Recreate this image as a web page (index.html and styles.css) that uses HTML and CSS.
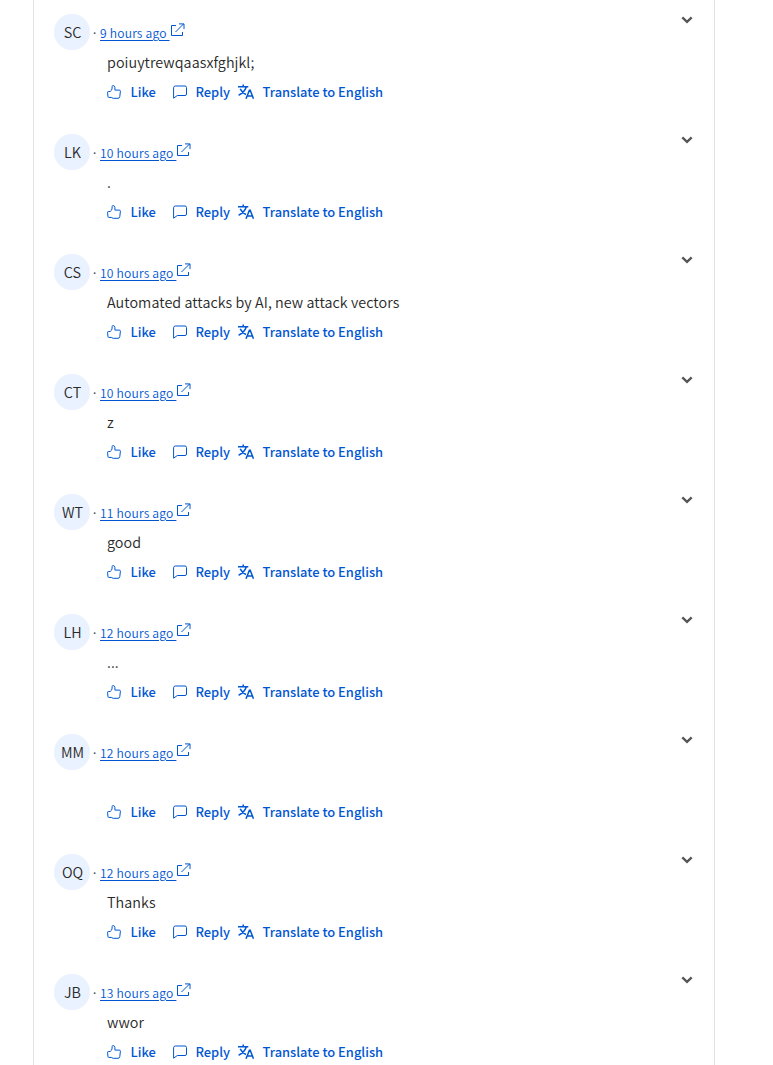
FILE: index.html
```
<!DOCTYPE html>
<html lang="en">
<head>
<meta charset="utf-8">
<title>Comments</title>
<link rel="stylesheet" href="styles.css">
</head>
<body>
<main class="comments" id="comments"></main>
<template id="comment">
<article class="comment">
<div class="avatar"></div>
<div class="content">
<div class="meta"><span class="dot">·</span><a class="time"></a><svg class="ext" viewBox="0 0 15 15"><path d="M6 2.5H1.5V12.5H12.5V9M5.5 9L13.5 1M9 .9H14V6"/></svg></div>
<p class="text"></p>
<div class="actions">
<svg class="thumb" viewBox="0 0 14 14"><path d="M.6 7.2Q.6 6.5 1.3 6.5H3.2Q5 5.5 5.1 3.2V1.4Q5.2.6 6.2.6Q7.9.7 7.9 2.6V5.1H12.3Q13.4 5.1 13.4 6.2L12.8 11.6Q12.5 13.3 11 13.3H6.2L4.2 12.4H1.8Q1 12.4 .9 11.5Z"/></svg><span class="like">Like</span>
<svg class="bubble" viewBox="0 0 14 14"><path d="M2.4 1H12Q13.5 1 13.5 2.5V9Q13.5 10.5 12 10.5H4.3L.6 13.2V2.7Q.6 1 2.4 1Z"/></svg><span class="reply">Reply</span>
<svg class="translate" viewBox="0 0 16 16"><path d="M0 2.8H10.3M5.2.5V2.8M2.2 4.8Q4.3 9 8 10.5M8.2 3Q6.5 8.5.6 11.2M8 14.8L11.4 6.2H12.2L15.5 14.8M9.2 12H14.4"/></svg><span class="translate-label">Translate to English</span>
</div>
</div>
<svg class="chevron" viewBox="0 0 12 8"><path d="M1.3 1.3L6 5.8L10.7 1.3"/></svg>
</article>
</template>
<script src="script.js"></script>
</body>
</html>
```
FILE: styles.css
```
* { box-sizing: border-box; }
body { margin: 0; background: #fff; color: #292929; font-family: "Noto Sans CJK SC", "Noto Sans", sans-serif; }
.comments { width: 682px; height: 1065px; margin-left: 33px; border: solid #e1e1e1; border-width: 0 1px; overflow: hidden; }
.comment { display: flex; height: 120px; padding: 14px 21px 0 20px; }
.avatar { width: 36px; height: 36px; padding-left: 1px; border-radius: 50%; background: #eaf2ff; font-size: 14.4px; font-weight: 350; line-height: 36px; text-align: center; flex: none; }
.content { flex: 1; min-width: 0; }
.meta { display: flex; height: 36px; padding-left: 3px; font-size: 12.1px; font-weight: 350; line-height: 38px; white-space: pre; }
.dot { width: 7px; color: #333; font-family: "Noto Sans", sans-serif; font-weight: 400; line-height: 40px; }
.time { color: #0056d2; letter-spacing: .19px; text-decoration: underline; text-underline-offset: 2px; }
.ext { width: 15px; height: 15px; margin-top: 9px; }
.text { margin: 0 0 0 17px; height: 26px; font-size: 14.35px; font-weight: 350; letter-spacing: .06px; line-height: 24px; }
.actions { display: flex; height: 32px; margin-left: 17px; align-items: center; font-size: 12.9px; font-weight: 500; color: #0056d2; white-space: nowrap; }
.actions span { line-height: 19px; margin-top: -1px; }
svg { fill: none; stroke: #0056d2; flex: none; }
.ext, .thumb, .bubble { stroke-width: 1; }
.thumb, .bubble { width: 14px; height: 14px; }
.like { width: 42px; margin-left: 9.5px; }
.reply { width: 42px; margin-left: 9px; }
.translate { width: 16px; height: 16px; stroke-width: 1.5; }
.translate-label { margin-left: 9px; }
.chevron { width: 12px; height: 8px; margin-top: 2px; stroke: #555; stroke-width: 2.3; }
```
FILE: script.js
```
const comments = [
  ["SC", "9 hours ago ", "poiuytrewqaasxfghjkl;"],
  ["LK", "10 hours ago ", "."],
  ["CS", "10 hours ago ", "Automated attacks by AI, new attack vectors"],
  ["CT", "10 hours ago ", "z"],
  ["WT", "11 hours ago ", "good"],
  ["LH", "12 hours ago ", "..."],
  ["MM", "12 hours ago ", ""],
  ["OQ", "12 hours ago ", "Thanks"],
  ["JB", "13 hours ago ", "wwor"]
];
const template = document.getElementById("comment");
for (const [initials, time, text] of comments) {
  const node = template.content.cloneNode(true);
  node.querySelector(".avatar").textContent = initials;
  node.querySelector(".time").textContent = time;
  node.querySelector(".text").textContent = text;
  document.getElementById("comments").append(node);
}
```
